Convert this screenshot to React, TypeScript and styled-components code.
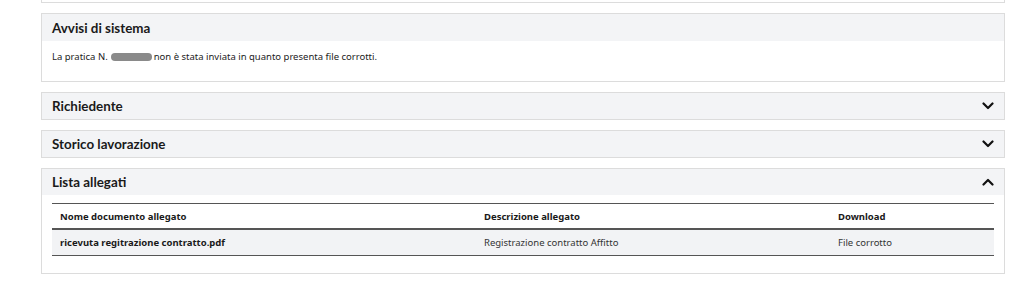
import React from "react";
import styled, { createGlobalStyle } from "styled-components";

const Global = createGlobalStyle`
  html, body { margin: 0; padding: 0; background: #ffffff; }
  body { font-family: "Noto Sans", "Open Sans", sans-serif; color: #1b1b1b; }
`;

const Page = styled.div`
  display: flex;
  flex-direction: column;
  gap: 10px;
  padding: 0 19px 0 41px;
`;

const Card = styled.section<{ $stub?: boolean }>`
  border: 1px solid #dcdcdc;
  border-top: ${(p) => (p.$stub ? "none" : "1px solid #dcdcdc")};
  height: ${(p) => (p.$stub ? "2px" : "auto")};
  background: #ffffff;
  display: flex;
  flex-direction: column;
`;

const Header = styled.div<{ $h?: number }>`
  display: flex;
  align-items: center;
  justify-content: space-between;
  height: ${(p) => p.$h ?? 26}px;
  padding: 0 10px 0 10px;
  background: #f3f4f6;
`;

const Title = styled.h3`
  margin: 0;
  font-family: "Lato", "Noto Sans", sans-serif;
  font-weight: 700;
  font-size: 13.4px;
  color: #1a1a1a;
`;

const Chevron = styled.svg`
  width: 12px;
  height: 12px;
  display: block;
`;

const Body = styled.div`
  padding: 9px 10px 0 10px;
  height: 31px;
  font-size: 9.5px;
  color: #222;
`;

const Redacted = styled.span`
  display: inline-block;
  width: 41px;
  height: 8px;
  border-radius: 4px;
  background: #8a8a8a;
  vertical-align: -1px;
  margin: 0 2px 0 3px;
`;

const ListBody = styled.div`
  padding: 8px 10px 17px 10px;
`;

const Table = styled.table`
  width: 100%;
  table-layout: fixed;
  border-collapse: collapse;
  font-size: 9.5px;
  border-top: 1px solid #555;
`;

const Col = styled.col<{ $w?: number }>`
  width: ${(p) => (p.$w ? `${p.$w}px` : "auto")};
`;

const Th = styled.th`
  text-align: left;
  font-weight: 700;
  height: 24px;
  padding: 0 8px;
  border-bottom: 2px solid #555;
  color: #1a1a1a;
`;

const Tr = styled.tr`
  background: #f2f3f5;
`;

const Td = styled.td<{ $bold?: boolean }>`
  height: 25px;
  padding: 0 8px;
  border-bottom: 1px solid #555;
  font-weight: ${(p) => (p.$bold ? 700 : 400)};
  color: ${(p) => (p.$bold ? "#1a1a1a" : "#333")};
`;

const ChevronIcon = ({ up }: { up?: boolean }) => (
  <Chevron viewBox="0 0 12 12">
    <polyline
      points={up ? "1.5,8.5 6,4 10.5,8.5" : "1.5,3.5 6,8 10.5,3.5"}
      fill="none"
      stroke="#111"
      strokeWidth="2.2"
      strokeLinecap="round"
      strokeLinejoin="round"
    />
  </Chevron>
);

export default function App() {
  return (
    <>
      <Global />
      <Page>
        <Card $stub />
        <Card>
          <Header $h={27}>
            <Title>Avvisi di sistema</Title>
          </Header>
          <Body>
            La pratica N.
            <Redacted />
            non è stata inviata in quanto presenta file corrotti.
          </Body>
        </Card>
        <Card>
          <Header>
            <Title>Richiedente</Title>
            <ChevronIcon />
          </Header>
        </Card>
        <Card>
          <Header>
            <Title>Storico lavorazione</Title>
            <ChevronIcon />
          </Header>
        </Card>
        <Card>
          <Header>
            <Title>Lista allegati</Title>
            <ChevronIcon up />
          </Header>
          <ListBody>
            <Table>
              <colgroup>
                <Col $w={424} />
                <Col $w={354} />
                <Col />
              </colgroup>
              <thead>
                <tr>
                  <Th>Nome documento allegato</Th>
                  <Th>Descrizione allegato</Th>
                  <Th>Download</Th>
                </tr>
              </thead>
              <tbody>
                <Tr>
                  <Td $bold>ricevuta regitrazione contratto.pdf</Td>
                  <Td>Registrazione contratto Affitto</Td>
                  <Td>File corrotto</Td>
                </Tr>
              </tbody>
            </Table>
          </ListBody>
        </Card>
      </Page>
    </>
  );
}
